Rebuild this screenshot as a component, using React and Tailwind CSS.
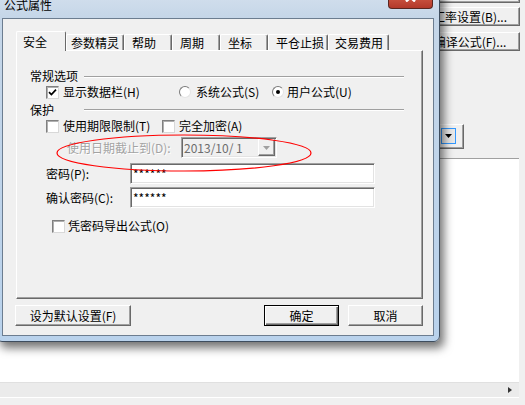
import React from 'react';

// Win7 dialog "公式属性" over a trading app window

const CheckBox = ({ checked }) => (
  <span className="w-[13px] h-[13px] shrink-0 bg-white border border-t-[#808080] border-l-[#808080] border-r-[#d8d8d8] border-b-[#d8d8d8] shadow-[inset_1px_1px_0_#b0b0b0] flex items-center justify-center">
    {checked && (
      <svg width="9" height="9" viewBox="0 0 9 9">
        <path d="M1 4.2 L3.4 6.6 L8 1.6" stroke="#000" strokeWidth="1.7" fill="none" />
      </svg>
    )}
  </span>
);

const Radio = ({ checked }) => (
  <span className="w-[12px] h-[12px] shrink-0 rounded-full bg-white border border-t-[#7a7a7a] border-l-[#7a7a7a] border-r-[#e4e4e4] border-b-[#e4e4e4] flex items-center justify-center">
    {checked && <span className="w-[4px] h-[4px] rounded-full bg-black" />}
  </span>
);

const Sep = ({ className = '' }) => (
  <span className={`block w-[320px] h-[2px] border-t border-t-[#a0a0a0] border-b border-b-white ${className}`} />
);

const sunken =
  'border border-t-[#a0a0a0] border-l-[#a0a0a0] border-r-white border-b-white shadow-[inset_1px_1px_0_#696969,inset_-1px_-1px_0_#e3e3e3]';
const raised =
  'border border-t-white border-l-white border-r-[#696969] border-b-[#696969] shadow-[inset_-1px_-1px_0_#a0a0a0] bg-[#f0f0f0]';

const tabs = [
  { label: '安全', w: 'w-[50px]', pl: 'pl-[6px]' },
  { label: '参数精灵', w: 'w-[58px]', pl: 'pl-[4px]' },
  { label: '帮助', w: 'w-[48px]', pl: 'pl-[7px]' },
  { label: '周期', w: 'w-[48px]', pl: 'pl-[7px]' },
  { label: '坐标', w: 'w-[48px]', pl: 'pl-[7px]' },
  { label: '平仓止损', w: 'w-[60px]', pl: 'pl-[7px]' },
  { label: '交易费用', w: 'w-[61px]', pl: 'pl-[6px]' },
];

export default function App() {
  return (
    <div className="relative w-[525px] h-[405px] overflow-hidden bg-[#f0f0f0] text-[12px] leading-[14px] text-black font-['Noto_Sans_CJK_SC','Noto_Sans',sans-serif]">
      {/* background application */}
      <div className="flex flex-col h-full">
        <div className="flex flex-col items-end pr-[5px]">
          <div className={`mt-[-16px] w-[100px] h-[19px] ${raised}`} />
          <div className={`mt-[4px] w-[100px] h-[19px] flex items-center justify-center ${raised}`}>
            汇率设置(B)...
          </div>
          <div className={`mt-[6px] w-[100px] h-[19px] flex items-center justify-center ${raised}`}>
            编译公式(F)...
          </div>
        </div>

        <div className={`mt-[73px] self-end mr-[61px] w-[90px] h-[25px] flex items-start justify-end ${raised}`}>
          <div className="mt-[3px] mr-[7px] w-[15px] h-[16px] border border-[#3399ff] bg-[#e8e8e8] flex items-center justify-center">
            <svg width="7" height="4" viewBox="0 0 7 4">
              <path d="M0 0 H7 L3.5 4 Z" fill="#000" />
            </svg>
          </div>
        </div>

        <div className="mt-[9px] w-[519px] h-[240px] bg-white border-t border-t-[#a0a0a0] flex flex-col pb-[1px]">
          <div className="flex-1" />
          <div className="h-[15px] bg-[#ebebeb] border-t border-t-[#e0e0e0] flex items-center justify-end pr-[7px]">
            <svg width="4" height="6" viewBox="0 0 4 6">
              <path d="M0 0 L4 3 L0 6 Z" fill="#333" />
            </svg>
          </div>
        </div>
      </div>

      {/* dialog window */}
      <div className="absolute left-[-4px] top-[-14px] w-[444px] h-[356px] flex flex-col rounded-[6px] border border-[#3e4d5e] bg-[linear-gradient(180deg,#d7e2ee_0px,#c5d6e8_30px,#b9d2ec_100%)] shadow-[4px_6px_10px_rgba(0,0,0,0.55)]">
        <div className="h-[31px] shrink-0 flex items-start">
          <span className="mt-[11px] ml-[7px]">公式属性</span>
          <div className="ml-auto mr-[6px] w-[45px] h-[22px] rounded-b-[4px] border border-[#5a2620] border-t-0 bg-[linear-gradient(180deg,#e9a192,#c9513f_55%,#b3392a)] flex items-center justify-center">
            <svg width="11" height="9" viewBox="0 0 11 9">
              <path d="M1 0.5 L10 8.5 M10 0.5 L1 8.5" stroke="#fff" strokeWidth="2.4" />
            </svg>
          </div>
        </div>

        <div className="mx-[5px] h-[318px] shrink-0 border border-[#6c7d90] bg-[#f0f0f0] flex flex-col">
          {/* tab strip */}
          <div className="mt-[12px] ml-[13px] h-[19px] flex items-end">
            {tabs.map((t, i) =>
              i === 0 ? (
                <div
                  key={t.label}
                  className={`${t.w} ${t.pl} h-[20px] mb-[-1px] relative z-10 bg-[#f0f0f0] border-l border-t border-white border-r border-r-[#696969] rounded-t-[2px] flex items-center`}
                >
                  {t.label}
                </div>
              ) : (
                <div
                  key={t.label}
                  className={`${t.w} ${t.pl} h-[16px] bg-[#f0f0f0] border-l border-t border-white border-r border-r-[#696969] shadow-[inset_-1px_0_0_#a0a0a0] rounded-t-[2px] flex items-center`}
                >
                  {t.label}
                </div>
              )
            )}
          </div>

          {/* tab panel */}
          <div className="ml-[13px] w-[407px] h-[249px] border border-l-white border-t-white border-r-[#696969] border-b-[#696969] shadow-[inset_-1px_-1px_0_#a0a0a0] flex flex-col">
            <div className="mt-[18px] h-[14px] flex items-center">
              <span className="ml-[13px] w-[54px]">常规选项</span>
              <Sep className="mt-[2px]" />
            </div>

            <div className="mt-[2px] h-[14px] ml-[29px] flex items-center">
              <label className="w-[133px] flex items-center gap-[4px]">
                <CheckBox checked />
                <span>显示数据栏(H)</span>
              </label>
              <label className="w-[93px] flex items-center gap-[5px]">
                <Radio />
                <span>系统公式(S)</span>
              </label>
              <label className="flex items-center gap-[3px]">
                <Radio checked />
                <span>用户公式(U)</span>
              </label>
            </div>

            <div className="mt-[4px] h-[14px] flex items-center">
              <span className="ml-[13px] w-[54px]">保护</span>
              <Sep />
            </div>

            <div className="mt-[2px] h-[14px] ml-[29px] flex items-center">
              <label className="w-[116px] flex items-center gap-[4px]">
                <CheckBox />
                <span>使用期限限制(T)</span>
              </label>
              <label className="flex items-center gap-[4px]">
                <CheckBox />
                <span>完全加密(A)</span>
              </label>
            </div>

            <div className="mt-[4px] h-[21px] ml-[50px] flex items-center">
              <span className="w-[114px] text-[#a3a3a3] [text-shadow:1px_1px_0_#fff]">使用日期截止到(D):</span>
              <div className={`w-[96px] h-[21px] bg-[#f0f0f0] flex items-center ${sunken}`}>
                <span className="flex-1 pl-[2px] text-[#6d6d6d]">2013/10/ 1</span>
                <div className={`w-[17px] h-[17px] mr-[1px] flex items-center justify-center ${raised}`}>
                  <svg width="7" height="4" viewBox="0 0 7 4">
                    <path d="M0 0 H7 L3.5 4 Z" fill="#a0a0a0" />
                  </svg>
                </div>
              </div>
            </div>

            <div className="mt-[5px] h-[21px] ml-[29px] flex items-center">
              <span className="w-[84px]">密码(P):</span>
              <div className={`w-[245px] h-[21px] bg-white flex items-center pl-[2px] ${sunken}`}>******</div>
            </div>

            <div className="mt-[3px] h-[21px] ml-[29px] flex items-center">
              <span className="w-[84px]">确认密码(C):</span>
              <div className={`w-[245px] h-[21px] bg-white flex items-center pl-[2px] ${sunken}`}>******</div>
            </div>

            <div className="mt-[11px] h-[14px] ml-[35px] flex items-center gap-[3px]">
              <CheckBox />
              <span>凭密码导出公式(O)</span>
            </div>
          </div>

          {/* buttons */}
          <div className="mt-[6px] ml-[12px] h-[21px] flex">
            <button className={`w-[116px] h-[21px] flex items-center justify-center ${raised}`}>设为默认设置(F)</button>
            <button className="ml-[133px] w-[75px] h-[21px] flex items-center justify-center bg-[#f0f0f0] border border-black shadow-[inset_1px_1px_0_#fff,inset_-1px_-1px_0_#696969,inset_-2px_-2px_0_#a0a0a0]">
              确定
            </button>
            <button className={`ml-[9px] w-[75px] h-[21px] flex items-center justify-center ${raised}`}>取消</button>
          </div>
        </div>
      </div>

      {/* red annotation ellipse */}
      <svg className="absolute left-0 top-0 pointer-events-none" width="525" height="405">
        <ellipse cx="184" cy="153" rx="127" ry="18" fill="none" stroke="#ff0000" strokeWidth="1.2" />
      </svg>
    </div>
  );
}
